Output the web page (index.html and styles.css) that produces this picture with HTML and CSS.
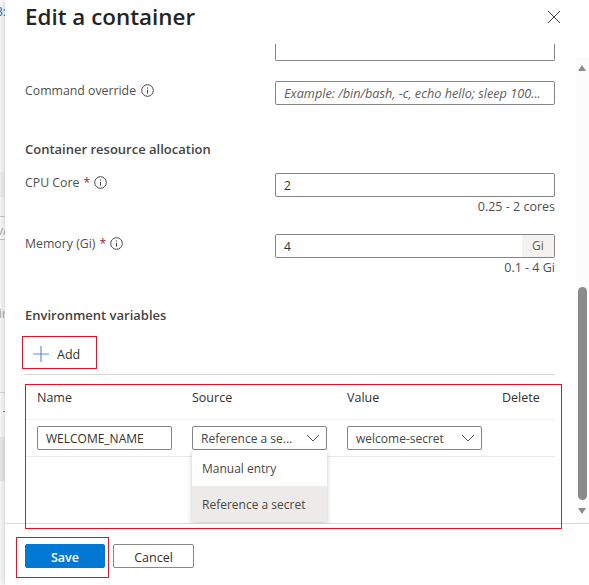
FILE: index.html
```html
<!DOCTYPE html>
<html lang="en">
<head>
  <meta charset="UTF-8" />
  <meta name="viewport" content="width=device-width, initial-scale=1.0" />
  <title>Edit a container</title>
  <link rel="stylesheet" href="styles.css">
</head>
<body>
  <!-- page behind the panel -->
  <div class="backdrop">
    <span class="peek peek-link">3:</span>
    <span class="peek peek-band1"></span>
    <span class="peek peek-rule1"></span>
    <span class="peek peek-v">v/</span>
    <span class="peek peek-rule2"></span>
    <span class="peek peek-in">ir</span>
    <span class="peek peek-rule3"></span>
    <span class="peek peek-tick"></span>
    <span class="peek peek-band2"></span>
  </div>

  <div class="panel">
    <header class="panel-head">
      <h1>Edit a container</h1>
      <svg class="close" width="14" height="14" viewBox="0 0 14 14"><path d="M1 1l12 12M13 1L1 13" stroke="#444" stroke-width="1" fill="none"/></svg>
    </header>

    <div class="body-wrap">
      <div class="content">
        <div class="cut-input"></div>

        <div class="row row-cmd">
          <label class="lbl">Command override <svg class="info" width="13" height="13" viewBox="0 0 13 13"><circle cx="6.5" cy="6.5" r="5.8" fill="none" stroke="#444"/><path d="M6.5 5.8v3.8M6.5 3.4v1.2" stroke="#444" fill="none"/></svg></label>
          <div class="field"><input class="txt ph" type="text" placeholder="Example: /bin/bash, -c, echo hello; sleep 100..."></div>
        </div>

        <h2 class="sec sec-res">Container resource allocation</h2>

        <div class="row row-cpu">
          <label class="lbl">CPU Core <span class="req">*</span> <svg class="info" width="13" height="13" viewBox="0 0 13 13"><circle cx="6.5" cy="6.5" r="5.8" fill="none" stroke="#444"/><path d="M6.5 5.8v3.8M6.5 3.4v1.2" stroke="#444" fill="none"/></svg></label>
          <div class="field">
            <input class="txt" type="text" value="2">
            <div class="hint">0.25 - 2 cores</div>
          </div>
        </div>

        <div class="row row-mem">
          <label class="lbl">Memory (Gi) <span class="req">*</span> <svg class="info" width="13" height="13" viewBox="0 0 13 13"><circle cx="6.5" cy="6.5" r="5.8" fill="none" stroke="#444"/><path d="M6.5 5.8v3.8M6.5 3.4v1.2" stroke="#444" fill="none"/></svg></label>
          <div class="field">
            <div class="txt-suffix"><input class="txt-inner" type="text" value="4"><span class="suffix">Gi</span></div>
            <div class="hint">0.1 - 4 Gi</div>
          </div>
        </div>

        <h2 class="sec sec-env">Environment variables</h2>

        <div class="toolbar">
          <button class="add-btn" type="button">
            <svg width="16" height="16" viewBox="0 0 16 16"><path d="M8 0v16M0 8h16" stroke="#5b93d8" stroke-width="1.2" fill="none"/></svg>
            Add
          </button>
        </div>

        <div class="env-table">
          <div class="env-row env-head">
            <div class="col-name">Name</div>
            <div class="col-source">Source</div>
            <div class="col-value">Value</div>
            <div class="col-del">Delete</div>
          </div>
          <div class="env-row env-data">
            <div class="col-name"><input class="cell-input" type="text" value="WELCOME_NAME"></div>
            <div class="col-source">
              <div class="drop"><span>Reference a se...</span><svg width="14" height="8" viewBox="0 0 14 8"><path d="M1 1l6 6 6-6" stroke="#555" fill="none"/></svg></div>
              <ul class="menu">
                <li>Manual entry</li>
                <li class="on">Reference a secret</li>
              </ul>
            </div>
            <div class="col-value">
              <div class="drop"><span>welcome-secret</span><svg width="14" height="8" viewBox="0 0 14 8"><path d="M1 1l6 6 6-6" stroke="#555" fill="none"/></svg></div>
            </div>
          </div>
        </div>
      </div>

      <div class="scroll">
        <span class="arrow up"></span>
        <span class="thumb"></span>
        <span class="arrow down"></span>
      </div>
    </div>

    <footer class="panel-foot">
      <button class="btn primary" type="button">Save</button>
      <button class="btn" type="button">Cancel</button>
    </footer>
  </div>

  <!-- red annotation boxes from the screenshot -->
  <div class="mark mark-add"></div>
  <div class="mark mark-table"></div>
  <div class="mark mark-save"></div>
</body>
</html>
```

FILE: styles.css
```css
html, body {
  margin: 0;
  height: 585px;
  overflow: hidden;
}
body {
  position: relative;
  width: 589px;
  font-family: "Open Sans", "Noto Sans", Arial, sans-serif;
  color: #323130;
  background: #fff;
  display: flex;
}
.backdrop {
  width: 5px;
  flex: none;
  position: relative;
  background: #fff;
  overflow: hidden;
}
.peek {
  position: absolute;
  left: 0;
  font-size: 12px;
  color: #aaa;
}
.peek-link { top: 3px; left: -4px; color: #0078d4; }
.peek-band1 { top: 172px; width: 5px; height: 25px; background: #f5f5f5; }
.peek-rule1 { top: 216px; width: 5px; height: 1px; background: #ccc; }
.peek-v { top: 222px; left: -3px; }
.peek-rule2 { top: 239px; width: 5px; height: 1px; background: #ccc; }
.peek-in { top: 305px; left: -1px; }
.peek-rule3 { top: 392px; width: 5px; height: 1px; background: #ddd; }
.peek-tick { top: 411px; left: 3px; width: 2px; height: 1px; background: #888; }
.peek-band2 { top: 437px; width: 5px; height: 44px; background: #efefef; }

.panel {
  flex: 1;
  display: flex;
  flex-direction: column;
  background: #fff;
  box-shadow: -3px 0 6px rgba(0,0,0,0.14);
  position: relative;
}
.panel-head {
  height: 44px;
  display: flex;
  justify-content: space-between;
  align-items: center;
  padding: 0 28px 0 20px;
  flex: none;
}
h1 {
  margin: 0;
  font-size: 22.4px;
  font-weight: 600;
  color: #252423;
  position: relative;
  top: -6px;
}
.close { position: relative; top: -5px; }

.body-wrap {
  height: 479px;
  flex: none;
  display: flex;
  border-bottom: 1px solid #d6d6d6;
  overflow: hidden;
}
.content {
  width: 550px;
  padding-left: 20px;
  box-sizing: border-box;
  flex: none;
}
.cut-input {
  width: 280px;
  height: 17px;
  margin-left: 250px;
  box-sizing: border-box;
  border: 1px solid #858585;
  border-top: 0;
  border-radius: 0 0 2px 2px;
}
.row {
  display: flex;
  justify-content: space-between;
  font-size: 12px;
}
.row-cmd { margin-top: 20px; height: 24px; }
.row-cpu { margin-top: 15px; }
.row-mem { margin-top: 19px; }
.lbl {
  display: flex;
  align-items: center;
  gap: 5px;
  height: 18px;
  font-size: 12.3px;
  color: #505050;
  white-space: nowrap;
}
.req { color: #a4262c; margin: 0 -1px 0 -1px; }
.info { flex: none; }
.field { width: 280px; }
.txt, .txt-suffix {
  display: block;
  width: 100%;
  height: 24px;
  box-sizing: border-box;
  border: 1px solid #858585;
  border-radius: 2px;
  font: inherit;
  color: #323130;
  background: #fff;
  padding: 0 8px;
  outline: none;
}
.txt-suffix {
  display: flex;
  padding: 0;
}
.txt-inner {
  flex: 1;
  min-width: 0;
  border: 0;
  padding: 0 8px;
  font: inherit;
  color: #323130;
  outline: none;
}
.suffix {
  width: 32px;
  background: #f3f2f1;
  color: #605e5c;
  text-align: center;
  line-height: 22px;
}
.ph::placeholder {
  color: #605e5c;
  font-size: 12.7px;
  font-style: italic;
  opacity: 1;
}
.hint {
  text-align: right;
  color: #505050;
  font-size: 12.5px;
  line-height: 16px;
  margin-top: 2px;
}
.sec {
  margin: 0;
  font-size: 13px;
  font-weight: 600;
  color: #444;
  line-height: 18px;
}
.sec-res { margin-top: 35px; }
.sec-env { margin-top: 30px; }

.toolbar {
  margin-top: 9px;
  height: 40px;
  padding-top: 1px;
  border-bottom: 1px solid #d6d6d6;
  display: flex;
  align-items: center;
}
.add-btn {
  display: flex;
  align-items: center;
  gap: 8px;
  border: 0;
  background: none;
  padding: 0 0 0 8px;
  font: inherit;
  font-size: 12.5px;
  color: #323130;
}

.env-table { font-size: 12.5px; }
.env-row {
  display: grid;
  grid-template-columns: 155px 155px 155px 1fr;
  padding-left: 12px;
}
.env-head {
  height: 45px;
  align-items: center;
  box-sizing: border-box;
  border-bottom: 1px solid #f0f0f0;
  font-weight: 500;
  color: #323130;
}
.env-data {
  height: 37px;
  box-sizing: border-box;
  padding-top: 6px;
  border-bottom: 1px solid #e8e8e8;
}
.cell-input {
  display: block;
  width: 135px;
  height: 24px;
  box-sizing: border-box;
  border: 1px solid #858585;
  border-radius: 2px;
  padding: 0 8px;
  font: inherit;
  font-size: 12px;
  color: #323130;
  outline: none;
}
.col-source { position: relative; }
.drop {
  width: 135px;
  height: 24px;
  box-sizing: border-box;
  border: 1px solid #858585;
  border-radius: 2px;
  padding: 0 6px 0 8px;
  display: flex;
  align-items: center;
  justify-content: space-between;
  font-size: 12px;
  color: #484644;
}
.menu {
  position: absolute;
  left: 0;
  top: 24px;
  width: 135px;
  margin: 0;
  padding: 0;
  list-style: none;
  background: #fff;
  box-shadow: 0 2px 5px rgba(0,0,0,0.22);
  font-size: 12px;
  color: #484644;
}
.menu li {
  height: 36px;
  line-height: 38px;
  padding-left: 10px;
  white-space: nowrap;
}
.menu li.on { background: #edebe9; }

.scroll {
  width: 14px;
  margin-left: 20px;
  margin-top: 13px;
  position: relative;
  background: #fcfcfc;
  flex: none;
}
.thumb {
  position: absolute;
  left: 3px;
  top: 230px;
  width: 9px;
  height: 213px;
  border-radius: 5px;
  background: #8b8b8b;
}
.arrow {
  position: absolute;
  left: 3px;
  width: 0;
  height: 0;
  border-left: 4px solid transparent;
  border-right: 4px solid transparent;
}
.up { top: 8px; border-bottom: 6px solid #8b8b8b; }
.down { top: 451px; border-top: 6px solid #8b8b8b; }

.panel-foot {
  display: flex;
  gap: 8px;
  padding: 20px 0 0 20px;
}
.btn {
  width: 81px;
  height: 24px;
  box-sizing: border-box;
  border: 1px solid #8a8886;
  border-radius: 2px;
  background: #fff;
  font: inherit;
  font-size: 12.5px;
  font-weight: 500;
  color: #323130;
  padding: 2px 0 0;
}
.btn.primary {
  width: 80px;
  background: #0078d4;
  border-color: #0078d4;
  color: #fff;
  font-weight: 600;
}

.mark {
  position: absolute;
  box-sizing: border-box;
  border: 1px solid #e81123;
}
.mark-add { left: 22px; top: 336px; width: 75px; height: 33px; }
.mark-table { left: 25px; top: 384px; width: 537px; height: 145px; }
.mark-save { left: 16px; top: 537px; width: 93px; height: 41px; }
```
